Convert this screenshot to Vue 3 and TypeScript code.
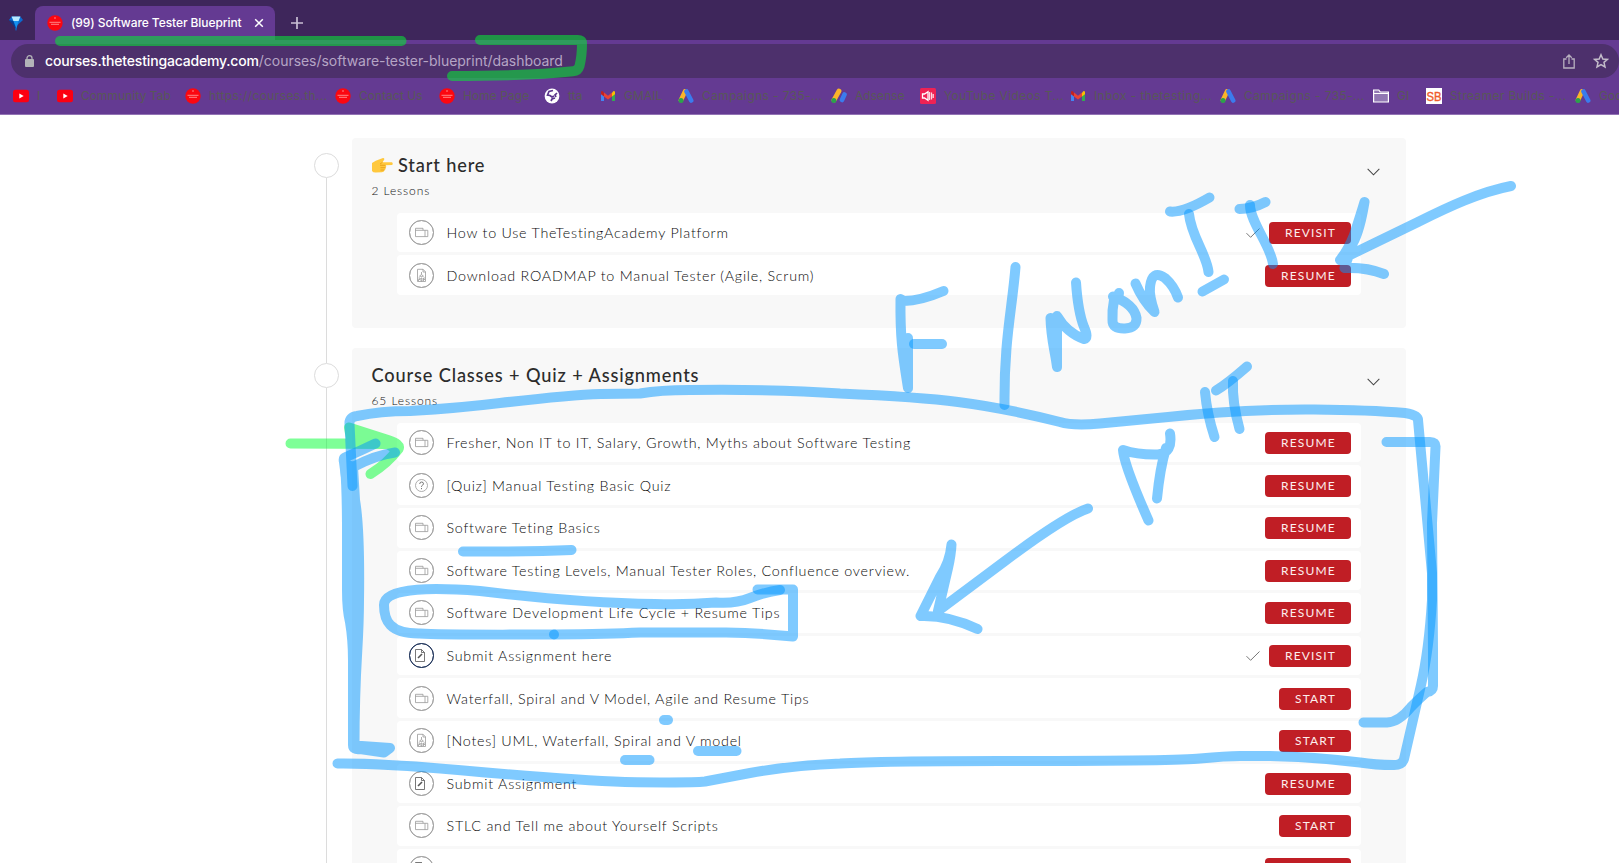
<script setup lang="ts">
type Kind = 'video' | 'pdf' | 'quiz' | 'task'
interface Lesson { title: string; kind: Kind; action: string; done?: boolean; active?: boolean }
interface Section { title: string; count: string; hand?: boolean; lessons: Lesson[] }
interface Bookmark { icon: string; label: string; width: number }

const bookmarks: Bookmark[] = [
  { icon: 'youtube', label: 'I', width: 44 },
  { icon: 'youtube', label: 'Community Tab', width: 128 },
  { icon: 'academy', label: 'https://courses.th...', width: 150 },
  { icon: 'academy', label: 'Contact Us', width: 104 },
  { icon: 'academy', label: 'Home Page', width: 105 },
  { icon: 'globe', label: 'tta', width: 56 },
  { icon: 'gmail', label: 'GMAIL', width: 78 },
  { icon: 'ads', label: 'Campaigns - 735-...', width: 153 },
  { icon: 'adsense', label: 'Adsense', width: 89 },
  { icon: 'speaker', label: 'YouTube Videos T...', width: 150 },
  { icon: 'gmail', label: 'Inbox - thetesting...', width: 150 },
  { icon: 'ads', label: 'Campaigns - 735-...', width: 153 },
  { icon: 'folder', label: 'GI', width: 53 },
  { icon: 'sb', label: 'Streamer Builds -...', width: 149 },
  { icon: 'ads', label: 'Goo', width: 80 },
]

const sections: Section[] = [
  {
    title: 'Start here', count: '2 Lessons', hand: true,
    lessons: [
      { title: 'How to Use TheTestingAcademy Platform', kind: 'video', action: 'REVISIT', done: true },
      { title: 'Download ROADMAP to Manual Tester (Agile, Scrum)', kind: 'pdf', action: 'RESUME' },
    ],
  },
  {
    title: 'Course Classes + Quiz + Assignments', count: '65 Lessons',
    lessons: [
      { title: 'Fresher, Non IT to IT, Salary, Growth, Myths about Software Testing', kind: 'video', action: 'RESUME' },
      { title: '[Quiz] Manual Testing Basic Quiz', kind: 'quiz', action: 'RESUME' },
      { title: 'Software Teting Basics', kind: 'video', action: 'RESUME' },
      { title: 'Software Testing Levels, Manual Tester Roles, Confluence overview.', kind: 'video', action: 'RESUME' },
      { title: 'Software Development Life Cycle + Resume Tips', kind: 'video', action: 'RESUME' },
      { title: 'Submit Assignment here', kind: 'task', action: 'REVISIT', done: true, active: true },
      { title: 'Waterfall, Spiral and V Model, Agile and Resume Tips', kind: 'video', action: 'START' },
      { title: '[Notes] UML, Waterfall, Spiral and V model', kind: 'pdf', action: 'START' },
      { title: 'Submit Assignment', kind: 'task', action: 'RESUME' },
      { title: 'STLC and Tell me about Yourself Scripts', kind: 'video', action: 'START' },
      { title: '', kind: 'task', action: '' },
    ],
  },
]

// Freehand marker strokes drawn over the page, in window coordinates.
const blueStrokes: string[] = [
  'M352.5 486 L349.5 424 Q349 417 357 416 Q380 411 410 411 Q460 408 500 403 Q570 395 601 394 L640 393.500 Q660 390 690 390 Q780 389 840 393.500 Q920 397 958 402 Q1005 408 1060 422 Q1073 426 1100 423.500 L1168 417 Q1240 409 1314 409.500 Q1370 410 1405 413 Q1418 415 1418 420 L1424.400 490 L1432 573 L1432 600 Q1429 650 1421 685 L1404 759 Q1402 765 1394 765 Q1375 765 1360 762.500 Q1300 755 1240 756 Q1226 756 1200 758.500 Q1180 761 1000 761 Q880 761 840 763.500 Q795 765 750 773 L705 781.500 Q690 783 625 782 Q570 780 458 770 Q380 763 337.500 763.500',
  'M1386.500 442 H1430 Q1436 442 1435.500 447 L1432 523 L1433 650 V686 Q1433 691 1427 692 Q1421 697 1411 707 Q1399 722 1387 722.500 H1363.500',
  'M1511 186 C1480 192 1448 207 1418 222 L1350 255 Q1342 257 1340 260 Q1348 250 1354 235 Q1360 217 1364.500 202 Q1360 230 1353 243 L1344.500 268 Q1366 267 1384 274',
  'M1170 211.500 Q1183 213 1209.500 197.500', 'M1189 214 C1191 236 1207 255 1208.500 272', 'M1202.500 291.500 L1224 279.500',
  'M1239.500 209 Q1252 209 1265.500 202', 'M1250 205 C1250 222 1271 246 1273 264',
  'M1050.500 318 C1051 340 1055 350 1057 367 V316 Q1067 333 1084 339 Q1089 338 1084 327 Q1078 312 1076 282.500',
  'M1119 293 Q1119 299 1114 300 Q1112 310 1112.500 320 Q1112 329 1125 328.500 Q1137 328 1136.500 318 Q1134 304 1113 296.500',
  'M1135.500 283.500 Q1143 301 1154.500 312 Q1149 296 1150 287 Q1152 269 1165 278 Q1174 286 1178 297.500',
  'M1015.500 267 C1012 310 1004 340 1004.500 405',
  'M943.500 291 Q920 301 904 301 L900.500 299 C900 340 903 356 908 388 V338', 'M914 344 H942',
  'M1205 392 Q1207 414 1214.500 437', 'M1233 381 Q1232 402 1239.500 429', 'M1216 390.500 Q1227 384 1247 366.500',
  'M1170 433.500 Q1173 453 1158 454.500 Q1138 455 1123 450 Q1124 465 1148.500 520.500 M1166 448 Q1160 468 1157 498.500',
  'M1088 508.500 Q1065 516 1005 561 L938 611 L948 568 Q951 555 951.500 544.500 Q950 562 940 577 L920.500 616 Q948 615 977.500 629',
  'M780 590 Q765 592 750 598 Q735 604 716 602.500 Q685 605 655 604 C590 603 530 597 480 591 C440 588 384 586 384 605 C384 620 389 634 420 633.500 Q440 635 554 634.500',
  'M554 634.500 Q610 634 640 632.500 H726 Q760 633 793 636.500 V589.500 H757.500',
  'M463 551.500 Q530 552 571.500 550', 'M664 720 H668', 'M625 760 H649.500', 'M698 751 H736.500',
]
</script>

<template>
  <div class="window">
    <header class="browser">
      <div class="tabs">
        <svg class="gem" viewBox="0 0 16 16"><path d="M3 0h10l3 4-6.500 6L8.500 16h-1L6.500 10 0 4z" fill="#0b6bd0" /><path d="M3 0h10l-2 5H5z" fill="#b7eaff" /><path d="M5 5h6l-2.500 8z" fill="#1692ee" /><path d="M0 4l5 1 3 9z" fill="#083b91" /></svg>
        <div class="tab">
          <svg class="ic" viewBox="0 0 16 16"><circle cx="8" cy="8" r="7.700" fill="#fb0710" /><path d="M2.500 7.300h11M4 9.300h8M7 3h2" stroke="#ff8585" stroke-width="1" /></svg>
          <span class="tab-title">(99) Software Tester Blueprint</span>
          <svg class="close" viewBox="0 0 10 10"><path d="M1.200 1.200l7.600 7.600M8.800 1.200L1.200 8.800" stroke="#fff" stroke-width="1.500" /></svg>
        </div>
        <svg class="plus" viewBox="0 0 12 12"><path d="M6 0v12M0 6h12" stroke="#c9bfd4" stroke-width="1.700" /></svg>
      </div>
      <div class="omnibox">
        <svg class="lock" viewBox="0 0 9 12"><rect y="4" width="9" height="8" rx="1" fill="#b3b3b8" /><path d="M2 5V3a2.500 2.300 0 0 1 5 0v2" fill="none" stroke="#b3b3b8" stroke-width="1.300" /></svg>
        <span class="url"><b>courses.thetestingacademy.com</b><i>/courses/software-tester-blueprint/dashboard</i></span>
        <svg class="share" viewBox="0 0 12 15"><path d="M3.500 5H.8v9h10.400V5H8.500M6 10V1M3.200 3.700L6 1l2.800 2.700" fill="none" stroke="#b8b0bf" stroke-width="1.300" /></svg>
        <svg class="star" viewBox="0 0 14 14"><path d="M7 1.500l1.600 3.700 4 .4-3 2.600.9 4L7 10.100l-3.500 2.100.9-4-3-2.600 4-.4z" fill="none" stroke="#c4bdca" stroke-width="1.300" /></svg>
      </div>
      <nav class="bookmarks">
        <div v-for="(b, i) in bookmarks" :key="i" class="bookmark" :class="{ clipped: b.label.endsWith('...') }" :style="{ width: b.width + 'px' }">
          <svg class="ic" viewBox="0 0 16 16">
            <template v-if="b.icon === 'youtube'"><rect y="1.700" width="16" height="12.600" rx="2.500" fill="#fc0011" /><path d="M6.300 5.500v5L10.700 8z" fill="#fff" /></template>
            <template v-else-if="b.icon === 'academy'"><circle cx="8" cy="8" r="7.700" fill="#fb0710" /><path d="M2.500 7.300h11M4 9.300h8M7 3h2" stroke="#ff8585" stroke-width="1" /></template>
            <template v-else-if="b.icon === 'globe'"><circle cx="8" cy="8" r="7.400" fill="#fff" /><path d="M9 2.500L5 3.500 3.500 7 6 7.500l2 1.500 2-1M13 5l-2 2 1 2M7 13l1-2 3-1" fill="none" stroke="#5b358c" stroke-width="1.700" /></template>
            <template v-else-if="b.icon === 'gmail'"><path d="M1 4v9h3V6z" fill="#4285f4" /><path d="M15 4v9h-3V6z" fill="#34a853" /><path d="M1 3.500v2.700l3 2.300V4.800L2.500 3z" fill="#c5221f" /><path d="M15 3.500v2.700l-3 2.300V4.800L13.500 3z" fill="#fbbc04" /><path d="M4 4.500l4 3.200 4-3.200v4l-4 3-4-3z" fill="#ea4335" /></template>
            <template v-else-if="b.icon === 'ads'"><path d="M7 3.500L3 12" stroke="#fbb429" stroke-width="4.600" stroke-linecap="round" /><path d="M8.500 3.500l4.700 9" stroke="#3b7bed" stroke-width="4.600" stroke-linecap="round" /><circle cx="3" cy="12.500" r="2.500" fill="#2ba24c" /></template>
            <template v-else-if="b.icon === 'adsense'"><path d="M8 3L3 12" stroke="#fbb429" stroke-width="4.800" stroke-linecap="round" /><path d="M13.500 6.500L11 12" stroke="#3b7bed" stroke-width="4.600" stroke-linecap="round" /><circle cx="2.800" cy="12.500" r="2.500" fill="#2ba24c" /></template>
            <template v-else-if="b.icon === 'speaker'"><rect width="16" height="16" rx="1.500" fill="#ef2254" /><path d="M2.500 6h2L8 3.800v8.400L4.500 10h-2z" fill="none" stroke="#fff" stroke-width="1.300" /><path d="M9.500 4v8M11.500 4.500v7M13.200 6v4" stroke="#ffd9e2" stroke-width="1.300" /></template>
            <template v-else-if="b.icon === 'folder'"><path d="M.6 2h5.200l1.500 2h8.100v10H.6z" fill="#9177b3" stroke="#fff" stroke-width="1.200" /><path d="M1 5.500h14" stroke="#fff" /></template>
            <template v-else><rect width="16" height="16" fill="#fff" /><text x="8" y="13" text-anchor="middle" textLength="15" lengthAdjust="spacingAndGlyphs" class="sb">SB</text></template>
          </svg>
          <span>{{ b.label }}</span>
        </div>
      </nav>
    </header>

    <main class="course">
      <section v-for="s in sections" :key="s.title" class="section">
        <div class="rail"><span class="dot"></span><span class="line"></span></div>
        <div class="card">
          <div class="head">
            <div>
              <h2>
                <svg v-if="s.hand" class="hand" viewBox="0 0 21 15"><path d="M0 5Q4 2 7 1.500L11 0Q13 0 12 2L10.500 4.200 20 4.300Q21.500 5.600 20 7L13.500 7.300Q15 8.800 13.500 9.700 14 11.300 12.500 12 12.500 14 10 14.200L3.500 14.500Q1 14.500 0 13z" fill="#ffc83d" /><path d="M8 7.300h5.500M8.500 9.700h5M8.500 12h4M10.500 4.300L8 6" fill="none" stroke="#e39a17" stroke-width=".8" /></svg>
                <span>{{ s.title }}</span>
              </h2>
              <p>{{ s.count }}</p>
            </div>
            <svg class="chevron" viewBox="0 0 14 8"><path d="M.7.7L7 7 13.300.7" fill="none" stroke="#444" stroke-width="1.100" /></svg>
          </div>
          <div class="rows">
            <div v-for="(l, i) in s.lessons" :key="i" class="row">
              <span class="badge" :class="{ active: l.active }">
                <svg viewBox="0 0 25 25">
                  <path v-if="l.kind === 'video'" d="M6.500 8.300h7.500v2M6.500 8.300v8.300h9.500v-6.300h-9.500M16 10.300h2.800v6.300H16" />
                  <g v-else-if="l.kind === 'pdf'"><path d="M8.500 6.300h5.500l2.500 2.500v9.700h-8zM14 6.300v2.700h2.500M12.500 9v2.200l-2 2.100h4l-2-2" /><path d="M9.500 15h1.500v1.500H9.500V18M12 18v-3h1v3zM14.500 18v-3H16M14.500 16.500H16" /></g>
                  <g v-else-if="l.kind === 'quiz'"><circle cx="12.500" cy="12.500" r="6" /><path class="ink" d="M10.700 11q0-2 1.900-2t1.900 1.800q0 1-1.200 1.500-.8.400-.8 1.500M12.500 15v1.200" /></g>
                  <g v-else class="ink"><path d="M6.500 6.500h6l3 3v9h-9zM12.500 6.500v3h3" /><path stroke-width="1.600" d="M9 15l4-4" /></g>
                </svg>
              </span>
              <span class="name">{{ l.title }}</span>
              <svg v-if="l.done" class="check" viewBox="0 0 14 10"><path d="M.5 5.200L4.600 9.300 13.500.5" fill="none" stroke="#777" /></svg>
              <span class="action" :class="(l.action || 'RESUME').toLowerCase()">{{ l.action }}</span>
            </div>
          </div>
        </div>
      </section>
    </main>

    <svg class="ink-layer" viewBox="0 0 1619 863">
      <g class="toolbar-ink"><path d="M60 41 H401.500" /><path d="M480 40 H578 Q582 40 582 43 Q582 56 579.500 66 Q578 71 573 71.300 Q530 76 452 76" /></g>
      <g class="green-ink"><path d="M290.500 443.500 H352 L349 427.500 L388 440 Q401 444 398.500 449 Q388 463 370.500 474 Q388 463 397 450 L388 444 Z" /></g>
      <g class="blue-ink">
        <path v-for="(d, i) in blueStrokes" :key="i" :d="d" />
        <g class="bracket">
          <path d="M375.500 443.500 Q360 451 346 457 Q343 458 344 462 L349 500 M395 452.500 Q376 455 353 467" />
          <path class="filled" d="M345 464 Q347 490 347 530 V590 Q347 610 350 622 Q353 640 353 660 V745 Q353 750 360 749 L384 752.500 L390 748 L354.500 745.500 C354.500 660 359 650 359 600 Q360 530 355 500 L353 467 Z" />
        </g>
      </g>
    </svg>
  </div>
</template>

<style>
body { margin: 0; overflow: hidden; background: #fff; }
</style>

<style scoped>
.window { position: relative; width: 1619px; height: 863px; overflow: hidden; background: #fff; font-family: Lato, "Liberation Sans", sans-serif; }
.browser { height: 114px; background: #643a92; border-bottom: 1px solid #9273b4; font-family: Inter, "Liberation Sans", sans-serif; }
.tabs { height: 40px; display: flex; align-items: flex-end; background: #3e265b; }
.gem { width: 14px; height: 15px; margin: 0 12px 9px 9px; }
.tab { width: 240px; height: 34px; box-sizing: border-box; padding: 0 11px 0 12px; display: flex; align-items: center; background: #643a92; border-radius: 8px 8px 0 0; }
.ic { width: 16px; height: 16px; flex: none; }
.tab-title { margin-left: 8px; flex: 1; white-space: nowrap; font-size: 12px; line-height: 16px; padding-bottom: 1px; font-weight: 500; color: #fff; letter-spacing: -0.080px; }
.close { width: 10px; height: 10px; }
.plus { width: 12px; height: 12px; margin: 0 0 11px 16px; }
.omnibox { margin: 4px 0 0 11px; width: 1608px; height: 34px; box-sizing: border-box; padding: 0 10px 0 14px; display: flex; align-items: center; background: #4d306c; border-radius: 17px; }
.lock { width: 9px; height: 12px; }
.url { flex: 1; margin-left: 11px; padding-bottom: 2px; font-size: 14px; white-space: nowrap; }
.url b { font-weight: 500; color: #fff; letter-spacing: -0.180px; }
.url i { font-style: normal; color: #b5a5c5; letter-spacing: -.030px; }
.share { width: 12px; height: 15px; margin-right: 18px; }
.star { width: 16px; height: 16px; }
.bookmarks { height: 36px; margin-left: 13px; display: flex; align-items: center; overflow: hidden; }
.bookmark { flex: none; display: flex; align-items: center; gap: 8px; font-size: 12px; line-height: 16px; color: #585858; letter-spacing: .050px; white-space: nowrap; }
.bookmark.clipped { letter-spacing: .380px; }
.sb { font: 13px "Liberation Sans", sans-serif; fill: #ef5b2b; stroke: #ef5b2b; stroke-width: .4px; letter-spacing: 0; }
.course { padding: 23px 0 0 314px; }
.section { display: flex; margin-bottom: 20px; position: relative; }
.rail { width: 25px; margin: 15px 13px -35px 0; display: flex; flex-direction: column; align-items: center; }
.dot { width: 25px; height: 25px; box-sizing: border-box; border: 1px solid #dcdcdc; border-radius: 50%; flex: none; }
.line { width: 1px; flex: 1; background: #dcdcdc; }
.card { width: 1054px; box-sizing: border-box; padding: 0 45px 33px; background: #f8f8f8; border-radius: 4px; }
.head { height: 74.800px; margin: 0 -19px 0 -25.500px; display: flex; justify-content: space-between; }
h2 { margin: 16px 0 0; height: 22px; display: flex; align-items: center; gap: 5.500px; font-size: 18.200px; line-height: 22px; font-weight: 500; color: #2c2c2c; letter-spacing: .860px; }
.hand { width: 21px; height: 15px; }
p { margin: 7px 0 0; font-size: 12px; line-height: 16px; font-weight: 300; color: #111; letter-spacing: .9px; }
.chevron { width: 13px; height: 8px; margin: 30px .5px 0 0; }
.rows { display: flex; flex-direction: column; gap: 3px; width: 964px; }
.row { height: 39.600px; box-sizing: border-box; padding: 0 10px 0 12.400px; display: flex; align-items: center; background: #fff; border-radius: 4px; }
.badge { width: 25px; height: 25px; box-sizing: border-box; border: 1.500px solid #a5a5a5; border-radius: 50%; flex: none; outline: .3px solid #a5a5a5; outline-offset: -1.500px; }
.badge.active { border-width: 1.500px; border-color: #263a60; outline-color: #263a60; }
.badge svg { display: block; width: 25px; height: 25px; margin: -1px; fill: none; stroke: #999; stroke-width: .8; }
.badge .ink { stroke: #555; }
.name { flex: 1; margin-left: 12.100px; font-size: 14.300px; font-weight: 300; color: #0a0a0a; letter-spacing: .760px; white-space: nowrap; }
.check { width: 14px; height: 10px; margin-right: 9px; }
.action { height: 22px; box-sizing: border-box; width: 86px; margin-top: .8px; padding-left: 1px; text-align: center; line-height: 21.500px; font-size: 12px; letter-spacing: 1.150px; color: #fdeeee; background: #c01e25; border-radius: 4px; font-weight: 400; }
.action.revisit { width: 82px; }
.action.start { width: 72px; }
.ink-layer { position: absolute; left: 0; top: 0; width: 1619px; height: 863px; pointer-events: none; }
.ink-layer path { fill: none; stroke-width: 10; stroke-linecap: round; stroke-linejoin: round; }
.toolbar-ink path { stroke: #08e437; opacity: .58; }
.green-ink path { stroke: #00ff32; opacity: .5; }
.ink-layer .green-ink path { fill: #00ff32; }
.blue-ink path { stroke: #0096ff; opacity: .5; }
.blue-ink .bracket { opacity: .5; }
.blue-ink .bracket path { opacity: 1; }
.ink-layer .blue-ink .filled { fill: #0096ff; }
</style>
